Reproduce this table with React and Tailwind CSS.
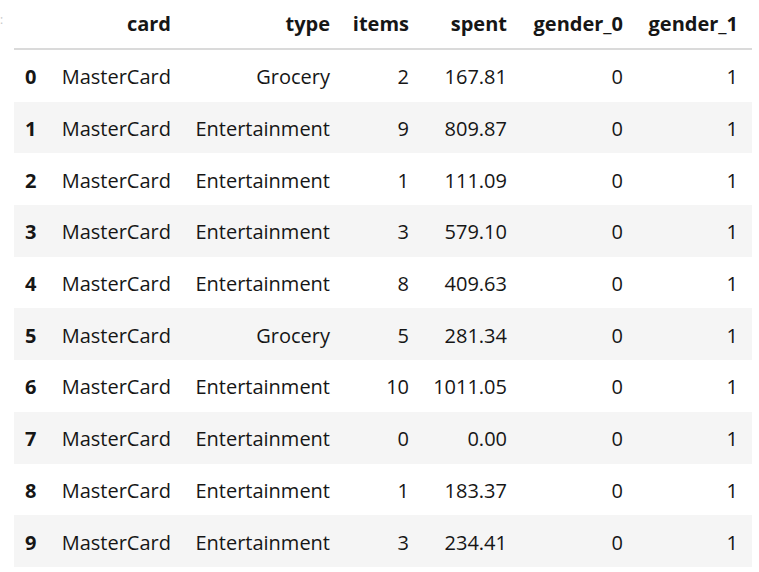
const cols = ['card', 'type', 'items', 'spent', 'gender_0', 'gender_1']

const rows = [
  ['MasterCard', 'Grocery', 2, '167.81', 0, 1],
  ['MasterCard', 'Entertainment', 9, '809.87', 0, 1],
  ['MasterCard', 'Entertainment', 1, '111.09', 0, 1],
  ['MasterCard', 'Entertainment', 3, '579.10', 0, 1],
  ['MasterCard', 'Entertainment', 8, '409.63', 0, 1],
  ['MasterCard', 'Grocery', 5, '281.34', 0, 1],
  ['MasterCard', 'Entertainment', 10, '1011.05', 0, 1],
  ['MasterCard', 'Entertainment', 0, '0.00', 0, 1],
  ['MasterCard', 'Entertainment', 1, '183.37', 0, 1],
  ['MasterCard', 'Entertainment', 3, '234.41', 0, 1],
]

// column widths measured off the notebook render
const grid = 'grid grid-cols-[32px_139px_159px_79px_98px_116px_115px]'

export default function App() {
  return (
    <div className="relative w-[759px] h-[572px] bg-white text-[#161616] text-[20px] font-['Open_Sans',sans-serif]">
      <span className="absolute left-0 top-[14px] text-[12px] text-[#c8c8c8] leading-none">:</span>
      <div className="ml-[14px] w-[738px]">
        <div className={`${grid} h-[50px] items-center font-bold border-b-2 border-[#dadada]`}>
          <div />
          {cols.map(c => (
            <div key={c} className="text-right pr-[14px]">{c}</div>
          ))}
        </div>
        {rows.map((r, i) => (
          <div
            key={i}
            className={`${grid} h-[51.7px] pt-[3px] items-center ${i % 2 === 1 ? 'bg-[#f5f5f5]' : 'bg-white'}`}
          >
            <div className="pl-[11px] font-bold">{i}</div>
            {r.map((v, j) => (
              <div key={j} className="text-right pr-[14px]">{v}</div>
            ))}
          </div>
        ))}
      </div>
    </div>
  )
}
